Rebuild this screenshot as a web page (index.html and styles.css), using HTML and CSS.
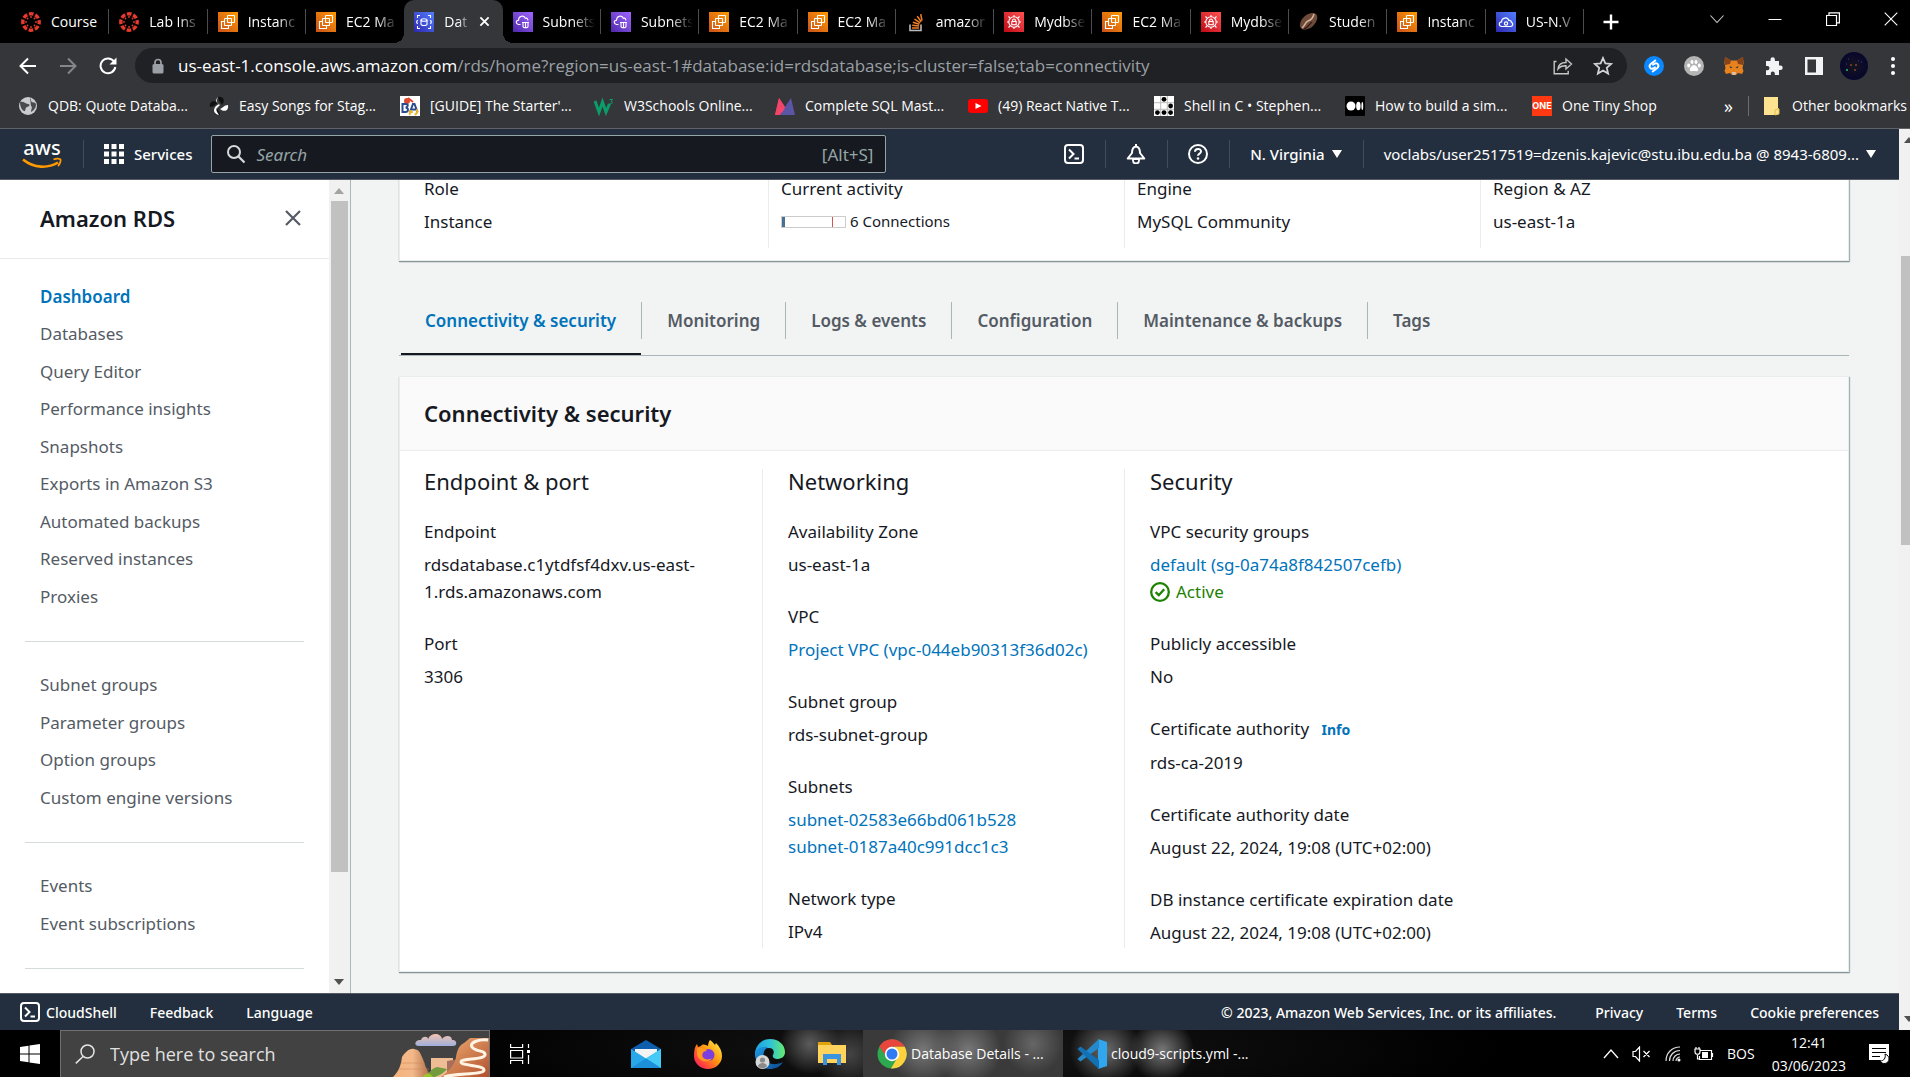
FILE: index.html
```html
<!DOCTYPE html>
<html lang="en">
<head>
<meta charset="utf-8">
<title>Database Details - RDS</title>
<link rel="stylesheet" href="styles.css">
</head>
<body>
<svg class="defs" aria-hidden="true">
  <defs>
    <linearGradient id="g-orange" x1="0" y1="1" x2="1" y2="0"><stop offset="0" stop-color="#c8511b"/><stop offset="1" stop-color="#ff9900"/></linearGradient>
    <linearGradient id="g-blue" x1="0" y1="1" x2="1" y2="0"><stop offset="0" stop-color="#2e27ad"/><stop offset="1" stop-color="#527fff"/></linearGradient>
    <linearGradient id="g-purple" x1="0" y1="1" x2="1" y2="0"><stop offset="0" stop-color="#4d27a8"/><stop offset="1" stop-color="#a166ff"/></linearGradient>
    <linearGradient id="g-red" x1="0" y1="1" x2="1" y2="0"><stop offset="0" stop-color="#bd0816"/><stop offset="1" stop-color="#ff5252"/></linearGradient>
    <linearGradient id="g-fox" x1="1" y1="0" x2="0" y2="1"><stop offset="0" stop-color="#fff44f"/><stop offset=".45" stop-color="#ff980e"/><stop offset=".8" stop-color="#ff3647"/><stop offset="1" stop-color="#e31587"/></linearGradient>
    <linearGradient id="g-edge" x1="0" y1="0" x2="1" y2="0"><stop offset="0" stop-color="#1ea0e0"/><stop offset=".5" stop-color="#2fc2d8"/><stop offset="1" stop-color="#66eb6e"/></linearGradient>
    <linearGradient id="g-edge2" x1="0" y1="0" x2="1" y2="1"><stop offset="0" stop-color="#1e9be8"/><stop offset="1" stop-color="#0c4a92"/></linearGradient>
    <linearGradient id="g-rock" x1="0" y1="0" x2="1" y2="0"><stop offset="0" stop-color="#f6b27a"/><stop offset=".5" stop-color="#f3b98a"/><stop offset="1" stop-color="#a96540"/></linearGradient>
    <linearGradient id="g-cliff" x1="0" y1="0" x2="1" y2="1"><stop offset="0" stop-color="#f3b174"/><stop offset="1" stop-color="#b0502f"/></linearGradient>
    <linearGradient id="g-cloud" x1="0" y1="0" x2="0" y2="1"><stop offset="0" stop-color="#f3c4b0"/><stop offset="1" stop-color="#9fb0dc"/></linearGradient>
    <radialGradient id="g-avatar"><stop offset="0" stop-color="#16131f"/><stop offset="1" stop-color="#07072c"/></radialGradient>
  </defs>
  <symbol id="i-canvas" viewBox="0 0 20 20">
    <circle cx="10" cy="10" r="8.2" fill="none" stroke="#e63a2c" stroke-width="3.4" stroke-dasharray="4.6 1.84" stroke-dashoffset="2.3"/>
    <g fill="#e63a2c"><circle cx="10" cy="5" r=".9"/><circle cx="10" cy="15" r=".9"/><circle cx="5" cy="10" r=".9"/><circle cx="15" cy="10" r=".9"/><circle cx="6.5" cy="6.5" r=".9"/><circle cx="13.5" cy="6.5" r=".9"/><circle cx="6.5" cy="13.5" r=".9"/><circle cx="13.5" cy="13.5" r=".9"/></g>
  </symbol>
  <symbol id="i-ec2" viewBox="0 0 20 20">
    <rect width="20" height="20" fill="url(#g-orange)"/>
    <g fill="none" stroke="#fff" stroke-width="1.1"><rect x="9.5" y="3.5" width="7" height="7" rx=".6"/><rect x="6.5" y="6.5" width="7" height="7" rx=".6"/><path d="M6.500 9.500H3.500v7h7v-3"/></g>
  </symbol>
  <symbol id="i-rds" viewBox="0 0 20 20">
    <rect width="20" height="20" fill="url(#g-blue)"/>
    <g fill="none" stroke="#fff" stroke-width="1.1"><ellipse cx="10" cy="8" rx="3" ry="1.300"/><path d="M7 8v4.200c0 1.700 6 1.700 6 0V8M6 3.500l-2.500 0 0 2.500M14 3.500h2.500V6M6 16.500H3.500V14M14 16.500h2.500V14M3.500 8L2.600 10l.9 2M16.500 8l.9 2-.9 2"/></g>
  </symbol>
  <symbol id="i-vpc" viewBox="0 0 20 20">
    <rect width="20" height="20" fill="url(#g-purple)"/>
    <g fill="none" stroke="#fff" stroke-width="1.100"><path d="M7.500 12.500H5.500c-3-.4-3-4 0-4.200 0-4.500 5.500-5.600 6.800-2 2-.6 2.700.6 2.500 2.200"/><path d="M9 10.500h7M10 10.500v4c0 1.600 5 1.600 5 0v-4M12.500 10.500v5"/></g>
  </symbol>
  <symbol id="i-iam" viewBox="0 0 20 20">
    <rect width="20" height="20" fill="url(#g-red)"/>
    <g fill="none" stroke="#fff" stroke-width="1.100"><circle cx="10" cy="10" r="5.200"/><rect x="7.800" y="9.500" width="4.400" height="3.200"/><path d="M8.600 9.500V8.200c0-1.700 2.800-1.700 2.800 0v1.300M10 3v2M10 15v2M3 10h2M15 10h2M4.500 4.500L6 6M14 14l1.500 1.500M15.500 4.500L14 6M6 14l-1.500 1.500"/></g>
  </symbol>
  <symbol id="i-cloud9" viewBox="0 0 20 20">
    <rect width="20" height="20" fill="url(#g-blue)"/>
    <g fill="none" stroke="#fff" stroke-width="1.200"><path d="M6 14.500c-3.500 0-3.500-4.300-.4-4.600C5.500 5.500 11.500 4.500 12.800 8.500c2-.4 2.600.9 2.600 1.900 2 .4 1.800 4.100-.9 4.100z"/><circle cx="10" cy="11.500" r="1.600"/></g>
  </symbol>
  <symbol id="i-stack" viewBox="0 0 20 20">
    <path d="M4 12.500v6h11v-6" fill="none" stroke="#bcbbbb" stroke-width="1.600"/>
    <path d="M6 16h7M6.200 13.200l6.900.8M6.900 10.300l6.500 2M8.500 7.200l5.700 3.600M11.200 4.300l4 5.400M14.700 2.200l1.300 6.500" fill="none" stroke="#f48024" stroke-width="1.500"/>
  </symbol>
  <symbol id="i-bean" viewBox="0 0 20 20">
    <path d="M1 13C1 6 9 0 15 1c5 1 4 8-1 13-4 4-13 6-13-1z" fill="#6e4a3a"/><path d="M3 16C6 14 6 10 9 9s5-3 6-7" fill="none" stroke="#d5b39c" stroke-width="1.500"/><path d="M5 17c4-1 5-5 8-7" fill="none" stroke="#2e1a12" stroke-width="1.300"/>
  </symbol>
  <symbol id="i-search" viewBox="0 0 20 20"><circle cx="8" cy="8" r="6" fill="none" stroke="currentColor" stroke-width="2"/><path d="M12.500 12.500l6 6" stroke="currentColor" stroke-width="2.200"/></symbol>
  <symbol id="i-shell" viewBox="0 0 20 20"><rect x="1" y="1" width="18" height="18" rx="3" fill="none" stroke="currentColor" stroke-width="2"/><path d="M5 5.500L9.500 10 5 14.500M10.500 14.500H15" fill="none" stroke="currentColor" stroke-width="2"/></symbol>
  <symbol id="i-check" viewBox="0 0 20 20"><circle cx="10" cy="10" r="8.800" fill="none" stroke="currentColor" stroke-width="2.300"/><path d="M5.600 10.200l3.200 3 5.400-6" fill="none" stroke="currentColor" stroke-width="2.300"/></symbol>
</svg>

<header class="browser">
  <div class="strip">
    <nav class="tabs" aria-label="Open tabs">
      <a class="tab" href="#"><svg><use href="#i-canvas"/></svg><span>Course</span></a>
      <a class="tab" href="#"><svg><use href="#i-canvas"/></svg><span>Lab Ins</span></a>
      <a class="tab" href="#"><svg><use href="#i-ec2"/></svg><span>Instanc</span></a>
      <a class="tab before-active" href="#"><svg><use href="#i-ec2"/></svg><span>EC2 Ma</span></a>
      <a class="tab active" href="#"><svg><use href="#i-rds"/></svg><span>Dat</span><svg class="tab-close" viewBox="0 0 12 12"><path d="M1.500 1.500l9 9M10.500 1.500l-9 9" stroke="#fff" stroke-width="2"/></svg></a>
      <a class="tab" href="#"><svg><use href="#i-vpc"/></svg><span>Subnets</span></a>
      <a class="tab" href="#"><svg><use href="#i-vpc"/></svg><span>Subnets</span></a>
      <a class="tab" href="#"><svg><use href="#i-ec2"/></svg><span>EC2 Ma</span></a>
      <a class="tab" href="#"><svg><use href="#i-ec2"/></svg><span>EC2 Ma</span></a>
      <a class="tab" href="#"><svg><use href="#i-stack"/></svg><span>amazor</span></a>
      <a class="tab" href="#"><svg><use href="#i-iam"/></svg><span>Mydbse</span></a>
      <a class="tab" href="#"><svg><use href="#i-ec2"/></svg><span>EC2 Ma</span></a>
      <a class="tab" href="#"><svg><use href="#i-iam"/></svg><span>Mydbse</span></a>
      <a class="tab" href="#"><svg><use href="#i-bean"/></svg><span>Studen</span></a>
      <a class="tab" href="#"><svg><use href="#i-ec2"/></svg><span>Instanc</span></a>
      <a class="tab" href="#"><svg><use href="#i-cloud9"/></svg><span>US-N.V</span></a>
    </nav>
    <button class="new-tab" aria-label="New tab"><svg viewBox="0 0 16 16"><path d="M8 .5v15M.5 8h15" stroke="#fff" stroke-width="2.400"/></svg></button>
    <div class="window-buttons">
      <button aria-label="Search tabs"><svg viewBox="0 0 14 14"><path d="M.5 3.500L7 10.500l6.500-7" fill="none" stroke="#ccc" stroke-width="1.100"/></svg></button>
      <button aria-label="Minimise"><svg viewBox="0 0 14 14"><path d="M.5 7.500h13" stroke="#fff"/></svg></button>
      <button aria-label="Restore"><svg viewBox="0 0 14 14"><path d="M.5 3.500h10v10H.5zM3 3.500V.9h10.400v10H11" fill="none" stroke="#fff" stroke-width="1.200"/></svg></button>
      <button aria-label="Close"><svg viewBox="0 0 14 14"><path d="M.7.7l12.600 12.600M13.300.7L.7 13.300" stroke="#fff" stroke-width="1.100"/></svg></button>
    </div>
  </div>

  <div class="toolbar">
    <button aria-label="Back"><svg viewBox="0 0 18 18"><path d="M17 9H2M9 1.500L1.500 9 9 16.500" fill="none" stroke="#fff" stroke-width="2"/></svg></button>
    <button aria-label="Forward"><svg viewBox="0 0 18 18"><path d="M1 9h15M9 1.500L16.500 9 9 16.500" fill="none" stroke="#85868a" stroke-width="2"/></svg></button>
    <button aria-label="Reload"><svg viewBox="0 0 18 18"><path d="M15 4.500A7.400 7.400 0 1 0 16.300 10" fill="none" stroke="#fff" stroke-width="2"/><path d="M17.500.5v7h-7z" fill="#fff"/></svg></button>
    <div class="omnibox">
      <svg class="lock" viewBox="0 0 12 16"><path d="M3 7V4.500a3 3 0 0 1 6 0V7" fill="none" stroke="#9aa0a6" stroke-width="1.700"/><rect x=".5" y="6" width="11" height="9.500" rx="1.500" fill="#9aa0a6"/></svg>
      <p class="url"><b>us-east-1.console.aws.amazon.com</b>/rds/home?region=us-east-1#database:id=rdsdatabase;is-cluster=false;tab=connectivity</p>
      <button aria-label="Share"><svg viewBox="0 0 20 18"><path d="M3.500 4.500H1.200v12.300h14v-3M5 12c.5-5 3.500-6.500 8-6.500V2l5.500 5-5.500 5V8.800C9.500 8.700 7 9.500 5 12z" fill="none" stroke="#c4c7c5" stroke-width="1.400"/></svg></button>
      <button aria-label="Bookmark"><svg viewBox="0 0 18 18"><path d="M9 1.800l2.100 4.900 5.300.4-4 3.500 1.200 5.200L9 13l-4.600 2.800 1.200-5.200-4-3.500 5.300-.4z" fill="none" stroke="#d0d2d4" stroke-width="1.600"/></svg></button>
    </div>
    <div class="extensions">
      <button aria-label="Shazam"><svg viewBox="0 0 20 20"><circle cx="10" cy="10" r="10" fill="#0a88ff"/><path d="M11.300 4.600L7 7.800c-3.200 2.600-.2 6.400 2.800 4.300l1.200-.9M8.700 15.400l4.300-3.200c3.200-2.600.2-6.400-2.800-4.300L9 8.800" fill="none" stroke="#fff" stroke-width="1.900" stroke-linecap="round"/></svg></button>
      <button aria-label="Paw"><svg viewBox="0 0 20 20"><circle cx="10" cy="10" r="10" fill="#b4b4b4"/><g fill="#fff"><ellipse cx="4.700" cy="9.500" rx="1.500" ry="2"/><ellipse cx="8" cy="6" rx="1.500" ry="2.100"/><ellipse cx="12" cy="6" rx="1.500" ry="2.100"/><ellipse cx="15.300" cy="9.500" rx="1.500" ry="2"/><path d="M10 9c2 0 4.500 3.300 4.200 5-.4 1.900-2.700 1-4.200 1s-3.800.9-4.200-1C5.500 12.300 8 9 10 9z"/></g></svg></button>
      <button aria-label="MetaMask"><svg viewBox="0 0 20 20"><path d="M1 1l6 3.500h6L19 1l.5 6-1 5 1 3-1.500 3-4-1-2 2H8l-2-2-4 1-1.500-3 1-3-1-5z" fill="#e8821e"/><path d="M1 1l6 3.500L6 8 1 9zM19 1l-6 3.500 1 3.500 5 1z" fill="#8a4318"/><path d="M8 16h4l-.5 3h-3z" fill="#d7c1b3"/><path d="M5.500 10l3 1.500-2 .8zM14.500 10l-3 1.500 2 .8z" fill="#233447"/></svg></button>
      <button aria-label="Extensions"><svg viewBox="0 0 20 20"><path d="M2 5h4.500V3.500a2.200 2.200 0 0 1 4.400 0V5H15v4.500h1.500a2.200 2.200 0 0 1 0 4.400H15V19h-4.200v-1.500a2 2 0 0 0-4 0V19H2v-4.700h1.300a2.200 2.200 0 0 0 0-4.400H2z" fill="#f1f3f4"/></svg></button>
      <button aria-label="Side panel"><svg viewBox="0 0 20 20"><path d="M1 1h18v18H1z M3.500 3.500v13h8.500v-13z" fill="#f1f3f4" fill-rule="evenodd"/></svg></button>
      <button class="profile" aria-label="Profile"><svg viewBox="0 0 28 28"><circle cx="14" cy="14" r="14" fill="url(#g-avatar)"/><path d="M8 7h1M18 9h1M6 12h1M21 10h1" stroke="#4437a0"/><path d="M11 12v2M16 12v2M15 17v2" stroke="#b06a2c"/><path d="M7 17v2" stroke="#27c06a" stroke-width="1.500"/></svg></button>
      <button aria-label="Menu"><svg class="dots" viewBox="0 0 4 18"><g fill="#fff"><circle cx="2" cy="2" r="2"/><circle cx="2" cy="9" r="2"/><circle cx="2" cy="16" r="2"/></g></svg></button>
    </div>
  </div>

  <nav class="bookmarks" aria-label="Bookmarks">
    <a href="#"><svg viewBox="0 0 20 20"><circle cx="10" cy="10" r="9" fill="#c9cccf"/><path d="M2 6c4-1 5 2 8 2s1 3-1 3-1 5-3 4-4-4-4-9zM12 2c2 2 0 3 2 4s4 0 4 3-3 6-5 7c0-3 2-5 0-6" fill="#494b4f"/></svg>QDB: Quote Databa...</a>
    <a href="#"><svg viewBox="0 0 20 20"><path d="M9 1c5-1 8 3 4 8-1-3-4-4-4-8zM11 19c-5 1-8-3-4-8 1 3 4 4 4 8zM1 11c-1-5 3-8 8-4-3 1-4 4-8 4z" fill="#111"/><path d="M9 1c-2 4-1 6 2 8l-3 3c-2 2 1 5 2 7-6-1-6-6-3-9l3-2C6 6 7 3 9 1zM19 9c1 5-3 8-8 4 3-1 4-4 8-4z" fill="#fff"/></svg>Easy Songs for Stag...</a>
    <a href="#"><svg viewBox="0 0 20 20"><path fill="#fff" d="M0 0h20v20H0z"/><circle cx="7" cy="5" r="3" fill="#e0492f"/><path d="M8 2l5 4" stroke="#e0492f" stroke-width="2"/><path d="M2.500 8h3c4 0 2 3.500 0 3.500 3.500 0 3 4.500 0 4.500h-3zM10 16l3-8h1.500l3 8M11.500 13.500h5" fill="none" stroke="#2b4c8c" stroke-width="2"/><path d="M10 19c-1-5 2-5 2-2M15 19c3-3 3-5 1-5" fill="none" stroke="#f0b323" stroke-width="2"/></svg>[GUIDE] The Starter'...</a>
    <a href="#"><svg viewBox="0 0 20 20"><path d="M1 5l4 11 3.500-10 3.500 10 3.500-8" fill="none" stroke="#0a9d68" stroke-width="3"/><path d="M15.500 3.500h3l-1.500 2c2 0 2 3-1.500 2" fill="none" stroke="#0a9d68"/></svg>W3Schools Online...</a>
    <a href="#"><svg viewBox="0 0 20 20"><path d="M4 2l6 9v8L0 19z" fill="#f2345c"/><path d="M16 2l-6 9-5 8h15z" fill="#5b55a5"/><path d="M4 2l6 9-1 3-5 5H0z" fill="#f2456a"/></svg>Complete SQL Mast...</a>
    <a href="#"><svg viewBox="0 0 20 20"><rect y="3" width="20" height="14" rx="3" fill="#f00"/><path d="M7.500 7v6l6-3z" fill="#fff"/></svg>(49) React Native T...</a>
    <a href="#"><svg viewBox="0 0 20 20"><path d="M0 0h20v20H0z" fill="#fff"/><path d="M6.700 0v20M13.300 0v20M0 6.700h20M0 13.300h20" stroke="#bbb"/><g fill="#000"><circle cx="10" cy="3.300" r="2.400"/><circle cx="16.600" cy="10" r="2.400"/><circle cx="3.400" cy="16.600" r="2.400"/><circle cx="10" cy="16.600" r="2.400"/><circle cx="16.600" cy="16.600" r="2.400"/></g></svg>Shell in C • Stephen...</a>
    <a href="#"><svg viewBox="0 0 20 20"><rect width="20" height="20" rx="1" fill="#000"/><g fill="#fff"><circle cx="6" cy="10" r="4.500"/><ellipse cx="13.400" cy="10" rx="2.200" ry="4.300"/><ellipse cx="17.300" cy="10" rx=".9" ry="4"/></g></svg>How to build a sim...</a>
    <a href="#"><span class="one">ONE</span>One Tiny Shop</a>
    <span class="more">»</span>
    <a class="other" href="#"><svg viewBox="0 0 20 20"><path d="M2 1h14v18H2z" fill="#fde28f"/><path d="M13 19v-5l3-1v-1l1 1v5z" fill="#fde28f" stroke="#e3bf4e"/></svg>Other bookmarks</a>
  </nav>
</header>

<div class="page">
  <div class="console">
    <header class="aws-nav">
      <a class="logo" href="#" aria-label="AWS"><span>aws</span><svg viewBox="0 0 40 13"><path d="M1 2.500c11 9 25 9 35 3" fill="none" stroke="#f90" stroke-width="2.600"/><path d="M31.500 2.500c3-1.500 6.500-1 7 0s-.5 4.500-2.500 6.500" fill="none" stroke="#f90" stroke-width="1.800"/></svg></a>
      <button class="services"><svg viewBox="0 0 20 20" fill="currentColor"><path d="M0 0h5v5H0zM7.500 0h5v5h-5zM15 0h5v5h-5zM0 7.500h5v5H0zM7.500 7.500h5v5h-5zM15 7.500h5v5h-5zM0 15h5v5H0zM7.500 15h5v5h-5zM15 15h5v5h-5z"/></svg>Services</button>
      <label class="aws-search"><svg><use href="#i-search"/></svg><input type="search" placeholder="Search" aria-label="Search"><kbd>[Alt+S]</kbd></label>
      <div class="aws-tools">
        <button aria-label="CloudShell"><svg><use href="#i-shell"/></svg></button>
        <button aria-label="Notifications"><svg viewBox="0 0 20 20"><path d="M10 2.500C6.500 3 6 6 6 9l-4.300 5.500h16.600L14 9c0-3-.5-6-4-6.500z" fill="none" stroke="#fff" stroke-width="2" stroke-linejoin="round"/><path d="M10 0v3" stroke="#fff" stroke-width="2"/><path d="M7 15h6v1.500a3 3 0 0 1-6 0z" fill="none" stroke="#fff" stroke-width="1.800"/></svg></button>
        <button aria-label="Help"><svg viewBox="0 0 20 20"><circle cx="10" cy="10" r="9" fill="none" stroke="#fff" stroke-width="2"/><path d="M7 7.800C7 4 13 4 13 7.500c0 2.300-3 2-3 4.300" fill="none" stroke="#fff" stroke-width="2"/><circle cx="10" cy="14.500" r="1.300" fill="#fff"/></svg></button>
        <button class="region">N. Virginia<svg class="caret" viewBox="0 0 10 8"><path d="M0 0h10L5 8z" fill="#fff"/></svg></button>
        <button class="account">voclabs/user2517519=dzenis.kajevic@stu.ibu.edu.ba @ 8943-6809...<svg class="caret" viewBox="0 0 10 8"><path d="M0 0h10L5 8z" fill="#fff"/></svg></button>
      </div>
    </header>

    <div class="workspace">
      <aside class="sidebar">
        <div class="sidebar-inner">
          <div class="sidebar-head">
            <h2>Amazon RDS</h2>
            <button aria-label="Close navigation"><svg viewBox="0 0 16 16"><path d="M1 1l14 14M15 1L1 15" stroke="#545b64" stroke-width="2.200"/></svg></button>
          </div>
          <nav class="sidebar-nav" aria-label="RDS">
            <ul>
              <li><a class="current" href="#">Dashboard</a></li>
              <li><a href="#">Databases</a></li>
              <li><a href="#">Query Editor</a></li>
              <li><a href="#">Performance insights</a></li>
              <li><a href="#">Snapshots</a></li>
              <li><a href="#">Exports in Amazon S3</a></li>
              <li><a href="#">Automated backups</a></li>
              <li><a href="#">Reserved instances</a></li>
              <li><a href="#">Proxies</a></li>
            </ul>
            <ul>
              <li><a href="#">Subnet groups</a></li>
              <li><a href="#">Parameter groups</a></li>
              <li><a href="#">Option groups</a></li>
              <li><a href="#">Custom engine versions</a></li>
            </ul>
            <ul>
              <li><a href="#">Events</a></li>
              <li><a href="#">Event subscriptions</a></li>
            </ul>
            <ul></ul>
          </nav>
        </div>
        <div class="scrollbar side-scroll"><i></i><svg class="up faint" viewBox="0 0 10 6"><path d="M0 6l5-6 5 6z"/></svg><svg class="down" viewBox="0 0 10 6"><path d="M0 0l5 6 5-6z"/></svg></div>
      </aside>

      <main class="main">
        <section class="card summary">
          <dl class="summary-grid">
            <div><dt>Role</dt><dd>Instance</dd></div>
            <div><dt>Current activity</dt><dd class="activity"><span class="gauge"></span>6 Connections</dd></div>
            <div><dt>Engine</dt><dd>MySQL Community</dd></div>
            <div><dt>Region &amp; AZ</dt><dd>us-east-1a</dd></div>
          </dl>
        </section>

        <nav class="section-tabs" aria-label="Database details">
          <a class="selected" href="#">Connectivity &amp; security</a>
          <a href="#">Monitoring</a>
          <a href="#">Logs &amp; events</a>
          <a href="#">Configuration</a>
          <a href="#">Maintenance &amp; backups</a>
          <a href="#">Tags</a>
        </nav>

        <section class="card">
          <header class="card-head"><h2>Connectivity &amp; security</h2></header>
          <div class="columns">
            <section>
              <h3>Endpoint &amp; port</h3>
              <dl>
                <dt>Endpoint</dt><dd>rdsdatabase.c1ytdfsf4dxv.us-east-1.rds.amazonaws.com</dd>
                <dt>Port</dt><dd>3306</dd>
              </dl>
            </section>
            <section>
              <h3>Networking</h3>
              <dl>
                <dt>Availability Zone</dt><dd>us-east-1a</dd>
                <dt>VPC</dt><dd><a href="#">Project VPC (vpc-044eb90313f36d02c)</a></dd>
                <dt>Subnet group</dt><dd>rds-subnet-group</dd>
                <dt>Subnets</dt><dd><a href="#">subnet-02583e66bd061b528</a><br><a href="#">subnet-0187a40c991dcc1c3</a></dd>
                <dt>Network type</dt><dd>IPv4</dd>
              </dl>
            </section>
            <section>
              <h3>Security</h3>
              <dl>
                <dt>VPC security groups</dt><dd><a href="#">default (sg-0a74a8f842507cefb)</a><span class="status"><svg><use href="#i-check"/></svg>Active</span></dd>
                <dt>Publicly accessible</dt><dd>No</dd>
                <dt>Certificate authority <a class="info" href="#">Info</a></dt><dd>rds-ca-2019</dd>
                <dt>Certificate authority date</dt><dd>August 22, 2024, 19:08 (UTC+02:00)</dd>
                <dt>DB instance certificate expiration date</dt><dd>August 22, 2024, 19:08 (UTC+02:00)</dd>
              </dl>
            </section>
          </div>
        </section>
      </main>
    </div>

    <footer class="aws-footer">
      <a class="shell" href="#"><svg><use href="#i-shell"/></svg>CloudShell</a>
      <a href="#">Feedback</a>
      <a href="#">Language</a>
      <span class="copyright">© 2023, Amazon Web Services, Inc. or its affiliates.</span>
      <a href="#">Privacy</a>
      <a href="#">Terms</a>
      <a href="#">Cookie preferences</a>
    </footer>
  </div>
  <div class="scrollbar page-scroll"><i></i><svg class="up" viewBox="0 0 10 6"><path d="M0 6l5-6 5 6z"/></svg><svg class="down" viewBox="0 0 10 6"><path d="M0 0l5 6 5-6z"/></svg></div>
</div>

<footer class="taskbar">
  <button class="start" aria-label="Start"><svg viewBox="0 0 20 20"><path d="M0 3l8.500-1.200v7.700H0zM9.500 1.600L20 0v9.500H9.500zM0 10.500h8.500v7.700L0 17zM9.500 10.500H20V20L9.500 18.400z" fill="#fff"/></svg></button>
  <label class="task-search">
    <svg class="glass" viewBox="0 0 20 20"><circle cx="12.500" cy="7.500" r="6.500" fill="none" stroke="#e4e4e4" stroke-width="1.500"/><path d="M8 12.500L.8 19.400" stroke="#e4e4e4" stroke-width="1.500"/></svg>
    <input type="search" placeholder="Type here to search" aria-label="Type here to search">
    <svg class="scene" viewBox="0 0 98 46">
      <path d="M40 27h22v19H40z" fill="#efbd94"/><path d="M56 30l18-3v19H56z" fill="#a8705c"/>
      <path d="M2 46c6-6 8-12 9-20 3-4 7-9 12-8 6 1 6 4 8 8 3 6 3 12 10 20z" fill="url(#g-rock)"/>
      <path d="M50 46c8-6 14-12 15-20 1-6 3-12 8-14l6-5h19v39z" fill="url(#g-cliff)"/>
      <path d="M10 32h24M8 38h30M68 24h26M62 34h30" stroke="#c98254" stroke-width=".8" opacity=".6"/>
      <path d="M97 9c-8-1-19 2-16 7s14 3 13 8-24 3-24 7 23 3 23 8-28 3-40 7" fill="none" stroke="#fff3e4" stroke-width="3"/>
      <path d="M36 46c2-5 4-8 10-10l10 2c-4 5-8 6-12 8z" fill="#719b3c"/><path d="M32 46c2-5 8-4 10 0z" fill="#9ac32d"/>
      <path d="M28 15c-6 0-4-7 2-6 1-4 7-4 7-1 3-7 13-6 14 0 4-5 10-3 10 1 5-1 6 6 1 6z" fill="url(#g-cloud)"/>
    </svg>
  </label>
  <button class="task-view" aria-label="Task view"><svg viewBox="0 0 20 20"><path d="M.6 0v3.500h12V0M.6 6.500h12v7.500h-12zM.6 20v-3.500h12V20M18.500 0v4M18.500 11v9" fill="none" stroke="#fff" stroke-width="1.200"/><path d="M17 6h3v3h-3z" fill="#fff"/></svg></button>
  <div class="pinned">
    <button aria-label="Mail"><svg viewBox="0 0 30 30"><path d="M0 10L15 1l15 9v10H0z" fill="#0d5fae"/><path d="M4 10h22v12H4z" fill="#f3f3f3"/><path d="M0 10l15 9.500L30 10v19H0z" fill="#28a8ea"/><path d="M15 19.500L30 10v19z" fill="#45c9f5"/><path d="M0 29l15-9.500L30 29z" fill="#1c8fd8"/></svg></button>
    <button aria-label="Firefox"><svg viewBox="0 0 30 30"><path d="M17 1c3 2 4 4 5 5l1-2c4 4 6 8 6 13a14 13 0 0 1-28 0C1 11 2 7 4 5l1 3 3-1c2-3 5-1 7 0 0-2 1-5 2-6z" fill="url(#g-fox)"/><circle cx="15.500" cy="16" r="6" fill="#7b3fe0"/><path d="M4 9c4-1 8 0 10 3-3 0-4 1-5 3-1 5 6 7 10 4-3 6-14 4-15-4z" fill="#ff9a20"/></svg></button>
    <button aria-label="Edge"><svg viewBox="0 0 30 30"><path d="M0 14C1 5 8 0 15 0c9 0 15 6 15 13 0 5-4 7-8 7-3 0-5-2-4-4 2-4 0-7-4-7-6 0-11 2-14 5z" fill="url(#g-edge)"/><path d="M0 13C3 8 8 7 13 8c-5 3-6 9-2 14 4 4 11 4 17 1-3 5-8 7-13 7C6 30-1 22 0 13z" fill="url(#g-edge2)"/><circle cx="7.500" cy="23" r="7" fill="#d8d8d8"/><circle cx="7.500" cy="21" r="2.600" fill="#8a8a8a"/><path d="M3 27c1-4 8-4 9 0-2 3-7 3-9 0z" fill="#8a8a8a"/></svg></button>
    <button aria-label="File Explorer"><svg viewBox="0 0 30 30"><path d="M1 3h12l2 3v3H1z" fill="#e0a30b"/><path d="M1 6h28v18H1z" fill="#ffd35c"/><path d="M6 26V15h18v11h-4v-6H10v6z" fill="#3a94e0"/></svg></button>
  </div>
  <button class="window-task on"><svg viewBox="0 0 30 30"><circle cx="15" cy="15" r="14.500" fill="#2da94f"/><path d="M2.500 7.500A14.500 14.500 0 0 1 27.600 7.700H15z" fill="#e8453c"/><path d="M2.500 7.500A14.500 14.500 0 0 1 15 .5l-2 9-4 8z" fill="#e8453c"/><path d="M27.700 7.800A14.500 14.500 0 0 1 14 29.500l7-12-4-9.700z" fill="#fdd23c"/><circle cx="15" cy="15" r="7.200" fill="#fff"/><circle cx="15" cy="15" r="5.500" fill="#2f7af2"/></svg>Database Details - ...</button>
  <button class="window-task"><svg viewBox="0 0 30 30"><path d="M21 0l9 3v24l-9 3z" fill="#2fa6ee"/><path d="M22 0v9L3.500 22.500.5 20z" fill="#2489ca"/><path d="M22 30v-9L3.500 7.500.5 10z" fill="#1271b5"/></svg>cloud9-scripts.yml -...</button>
  <div class="tray">
    <svg viewBox="0 0 16 16"><path d="M1 12l7-8 7 8" fill="none" stroke="#fff" stroke-width="1.300"/></svg>
    <svg class="wide" viewBox="0 0 20 16"><path d="M1 5.500h2.500L7.500 1v14l-4-4.500H1zM11.500 5l6 6M17.500 5l-6 6" fill="none" stroke="#fff" stroke-width="1.200"/></svg>
    <svg viewBox="0 0 16 16"><g fill="none" stroke="#ddd" stroke-width="1.200"><path d="M1 15C1 7 7 1 15 1M4.500 15c0-6 4.500-10.500 10.500-10.500M8 15c0-4 3-7 7-7M11 15c0-2 2-4 4-4"/></g><circle cx="14" cy="14" r="1.500" fill="#fff"/></svg>
    <svg class="wide" viewBox="0 0 20 16"><path d="M6.500 4.500h11v9h-12V10M18.500 7v4M1 3h5v3c0 3-5 3-5 0zM2 3V1M5 3V1M3.500 9v4H5" fill="none" stroke="#fff" stroke-width="1.200"/><path d="M8 6h6v6H8z" fill="#fff"/></svg>
    <span>BOS</span>
    <time datetime="2023-06-03T12:41">12:41<br>03/06/2023</time>
    <svg class="note" viewBox="0 0 22 22"><path d="M1 1h20v14l-5 5-4-3H1z" fill="#fff"/><path d="M4 5.500h14M4 9.500h14M4 13.500h8" stroke="#000" stroke-width="1.200"/><path d="M17 11c1 4-1 7-5 7 2 4 9 3 9-2 0-2-1-4-4-5z" fill="#fff" stroke="#000"/></svg>
  </div>
</footer>
</body>
</html>
```

FILE: styles.css
```css
* { box-sizing: border-box; }
html, body { height: 100%; }
body {
  margin: 0;
  display: flex;
  flex-direction: column;
  overflow: hidden;
  background: #000;
  color: #16191f;
  font: 17px/27px "Noto Sans", sans-serif;
}
h2, h3, p, ul, dl, dd { margin: 0; padding: 0; }
ul { list-style: none; }
a { color: inherit; text-decoration: none; }
button { margin: 0; padding: 0; border: 0; background: none; color: inherit; font: inherit; cursor: pointer; }
input { min-width: 0; padding: 0; border: 0; outline: 0; background: none; color: inherit; font: inherit; }
svg { display: block; flex: none; width: 20px; height: 20px; }
.defs { position: absolute; width: 0; height: 0; }

/* Browser chrome */
.browser {
  flex: none;
  background: #35363a;
  border-bottom: 1px solid #5f6368;
  color: #fff;
  font: 14px/20px "Open Sans", sans-serif;
}
.strip { display: flex; height: 43px; background: #000; }
.tabs { flex: 1; display: grid; grid-template-columns: repeat(16, minmax(0, 1fr)); padding-left: 11px; }
.tab { display: flex; align-items: center; gap: 10px; padding-left: 10px; position: relative; }
.tab span {
  white-space: nowrap;
  mask-image: linear-gradient(90deg, #000 30px, transparent 52px);
}
.tab:first-child span { mask-image: none; }
.tab::after { content: ""; position: absolute; right: 0; top: 9px; width: 1px; height: 25px; background: #4a4c50; }
.tab.before-active::after { display: none; }
.tab.active { background: #35363a; border-radius: 10px 10px 0 0; }
.tab.active span { width: 25px; mask-image: linear-gradient(90deg, #000 14px, transparent 27px); }
.tab.active::before, .tab.active::after { content: ""; position: absolute; top: auto; bottom: 0; width: 10px; height: 10px; }
.tab.active::before { left: -10px; background: radial-gradient(circle at 0 0, transparent 10px, #35363a 10px); }
.tab.active::after { right: -10px; background: radial-gradient(circle at 100% 0, transparent 10px, #35363a 10px); }
.tab .tab-close { width: 11px; height: 11px; }
.new-tab { width: 54px; display: grid; place-items: center; }
.new-tab svg { width: 16px; height: 16px; }
.window-buttons { width: 272px; display: flex; justify-content: flex-end; gap: 44px; padding: 0 12px 6px 0; }
.window-buttons svg { width: 14px; height: 14px; }

.toolbar { display: flex; align-items: center; height: 45px; padding: 0 15px 0 19px; }
.toolbar > button { width: 40px; }
.toolbar > button svg { width: 18px; height: 18px; }
.omnibox {
  flex: 1;
  display: flex;
  align-items: center;
  height: 35px;
  margin: 0 17px 0 -4px;
  padding: 0 14px 0 17px;
  border-radius: 18px;
  background: #202124;
}
.lock { width: 12px; height: 16px; margin-right: 14px; }
.url { flex: 1; color: #9aa0a6; font-size: 17px; white-space: nowrap; overflow: hidden; }
.url b { color: #fff; font-weight: 400; }
.omnibox button { margin-left: 20px; }
.extensions { display: flex; align-items: center; gap: 20px; }
.extensions .profile { margin: 0 -4px; }
.profile svg { width: 28px; height: 28px; }
.extensions .dots { width: 4px; height: 18px; margin-left: 7px; }

.bookmarks {
  display: grid;
  grid-template-columns: 191px 191px 194px 181px 193px 186px 191px 187px 192px 1fr auto;
  align-items: center;
  height: 40px;
  padding: 0 3px 4px 18px;
  white-space: nowrap;
}
.bookmarks a { display: flex; align-items: center; gap: 10px; }
.one { width: 20px; height: 20px; background: #ff3a12; font: 700 9px/20px Inter, sans-serif; text-align: center; }
.more { font-size: 18px; }
.other { padding-left: 13px; border-left: 1px solid #6b6d71; }

/* AWS console */
.page { flex: 1; display: flex; min-height: 0; }
.console { flex: 1; display: flex; flex-direction: column; min-width: 0; }
.aws-nav {
  flex: none;
  display: flex;
  align-items: center;
  height: 51px;
  padding-left: 22px;
  background: #232f3e;
  border-bottom: 1px solid #545b64;
  color: #fff;
  font-size: 15px;
  font-weight: 500;
}
.logo { display: block; width: 40px; font: 500 20px/19px "Noto Sans", sans-serif; text-align: center; }
.logo svg { width: 40px; height: 13px; }
.services { display: flex; align-items: center; gap: 10px; height: 28px; margin-left: 21px; padding: 0 19px 0 20px; border-left: 1px solid #414d5c; }
.aws-search {
  display: flex;
  align-items: center;
  gap: 10px;
  width: 675px;
  height: 38px;
  padding: 0 12px 0 14px;
  background: #16191f;
  border: 1px solid #95a5a6;
  border-radius: 2px;
  color: #d5dbdb;
  font-size: 17px;
  font-weight: 400;
}
.aws-search input { flex: 1; }
.aws-search input::placeholder { color: #95a5a6; font-style: italic; opacity: 1; }
.aws-search kbd { color: #95a5a6; font: inherit; }
.aws-tools { display: flex; margin-left: auto; }
.aws-tools button { display: flex; align-items: center; gap: 7px; height: 28px; padding: 0 21px 0 20px; white-space: nowrap; }
.aws-tools button + button { border-left: 1px solid #414d5c; }
.aws-tools .account { padding-right: 23px; font-weight: 400; }
.caret { width: 10px; height: 8px; }

.workspace { flex: 1; display: flex; min-height: 0; background: #f2f3f3; }
.sidebar { flex: none; display: flex; width: 351px; overflow: hidden; background: #fff; border-right: 1px solid #aab7b8; }
.sidebar-inner { flex: 1; overflow: hidden; color: #545b64; }
.sidebar-head {
  display: flex;
  align-items: center;
  justify-content: space-between;
  height: 79px;
  padding: 0 28px 3px 40px;
  border-bottom: 1px solid #eaeded;
  color: #16191f;
}
.sidebar-head h2, .card-head h2 { font-size: 22px; line-height: 28px; font-weight: 600; }
.sidebar-head svg { width: 16px; height: 16px; }
.sidebar-nav { padding: 24px 25px 0; }
.sidebar-nav ul { display: flex; flex-direction: column; gap: 10px; padding: 0 15px; }
.sidebar-nav ul + ul { margin-top: 31px; padding-top: 29px; border-top: 1px solid #d5dbdb; }
.sidebar-nav ul:first-child li:nth-child(odd):not(:first-child) { padding-top: 1px; }
.sidebar-nav ul + ul li:nth-child(even) { padding-top: 1px; }
.sidebar-nav .current { color: #0073bb; font-weight: 600; }

.scrollbar { position: relative; display: grid; background: #f1f1f1; }
.scrollbar i { grid-row: 2; margin: 0 2px; background: #c1c1c1; }
.scrollbar svg { position: absolute; left: 5px; width: 10px; height: 6px; fill: #505050; }
.scrollbar .faint { fill: #a3a3a3; }
.scrollbar .up { top: 8px; }
.scrollbar .down { bottom: 8px; }
.side-scroll { width: 21px; grid-template-rows: 21fr 671fr 121fr; }
.page-scroll { width: 11px; overflow: hidden; grid-template-rows: 127fr 289fr 485fr; }
.page-scroll i { margin-right: 0; }

/* Detail pane */
.main { flex: 1; min-width: 0; overflow: hidden; padding: 0 50px 0 48px; }
.card { background: #fff; border: 1px solid #eaeded; box-shadow: 0 1px 1px #879596, 1px 1px 1px #aab7b8; }
.summary { margin-top: -5px; padding: 0 12px 12px; border-top: 0; }
.summary-grid { display: grid; grid-template-columns: repeat(4, 1fr); }
.summary-grid > div { padding: 0 12px 13px; }
.summary-grid > div + div { border-left: 1px solid #eaeded; }
.summary-grid dd { margin-top: 6px; }
.activity { display: flex; align-items: center; gap: 4px; font-size: 15px; }
.gauge {
  width: 65px;
  height: 12px;
  border: 1px solid #ccc;
  background: linear-gradient(90deg, #486f94 3px, #fff 3px 50px, #d9534f 50px 51px, #fff 51px);
}

.section-tabs { display: flex; margin-top: 41px; padding-left: 2px; border-bottom: 1px solid #aab7b8; color: #545b64; font-weight: 600; }
.section-tabs a { position: relative; margin-bottom: 16px; padding: 5px 25px; }
.section-tabs a + a { border-left: 1px solid #aab7b8; }
.section-tabs .selected { color: #0073bb; padding-left: 24px; }
.section-tabs .selected::after { content: ""; position: absolute; left: 0; right: 0; bottom: -16px; height: 2px; background: #16191f; }
.section-tabs + .card { margin-top: 20px; }

.card-head { padding: 22px 24px 23px; background: #fafafa; border-bottom: 1px solid #eaeded; }
.columns { display: grid; grid-template-columns: repeat(4, 1fr); padding: 18px 0 23px; }
.columns > section { padding: 0 12px 2px 24px; }
.columns > section + section { border-left: 1px solid #eaeded; padding-left: 25px; }
.columns > :last-child { grid-column: span 2; }
.columns h3 { margin-bottom: 25px; font-size: 22px; line-height: 24px; font-weight: 400; }
.columns dd { margin-top: 6px; }
.columns dd + dt { margin-top: 25px; }
.columns a { color: #0073bb; }
.status { display: flex; align-items: center; gap: 6px; color: #1d8102; }
.columns .info { margin-left: 8px; font-size: 14px; font-weight: 700; }

.aws-footer {
  flex: none;
  display: flex;
  align-items: center;
  gap: 33px;
  height: 37px;
  padding: 0 20px 0;
  background: #232f3e;
  border-top: 1px solid #545b64;
  color: #fff;
  font-size: 14px;
  font-weight: 500;
}
.shell { display: flex; align-items: center; gap: 6px; }
.copyright { margin-left: auto; margin-right: 6px; }

/* Windows taskbar */
.taskbar {
  flex: none;
  display: flex;
  align-items: center;
  height: 47px;
  color: #fff;
  font: 14px/28px "Open Sans", sans-serif;
  background:
    radial-gradient(circle 30px at 810px 14px, #5c5c5c, transparent),
    radial-gradient(circle 36px at 850px 24px, #444, transparent),
    radial-gradient(circle 36px at 1106px 20px, #6a6a6a, transparent),
    radial-gradient(circle 32px at 1162px 20px, #777, transparent),
    radial-gradient(ellipse 540px 80px at 960px 20px, #161616, transparent),
    #000;
}
.start { width: 60px; display: grid; place-items: center; }
.task-search {
  display: flex;
  align-items: center;
  width: 430px;
  height: 100%;
  padding-left: 14px;
  background: #424242;
  border: 1px solid #707070;
  border-bottom: 0;
}
.task-search input { flex: 1; margin-left: 15px; font-size: 18px; }
.task-search input::placeholder { color: #e0e0e0; opacity: 1; }
.task-search .scene { width: 98px; height: 46px; }
.task-view { margin-left: 20px; }
.pinned { display: flex; gap: 32px; margin: 0 16px 0 101px; }
.pinned svg, .window-task svg { width: 30px; height: 30px; }
.window-task { display: flex; align-items: center; gap: 4px; width: 200px; height: 100%; padding-left: 14px; white-space: nowrap; }
.on {
  background:
    radial-gradient(circle 34px at 60px 20px, #777, transparent),
    radial-gradient(circle 34px at 105px 20px, #777, transparent),
    radial-gradient(circle 30px at 170px 14px, #666, transparent),
    #3a3a3a;
}
.tray { display: flex; align-items: center; gap: 13px; margin-left: auto; padding-right: 20px; }
.tray svg { width: 16px; height: 16px; }
.tray .wide { width: 20px; }
.tray time { margin: 0 9px 0 4px; text-align: center; line-height: 23px; }
.tray .note { width: 22px; height: 22px; }
```
